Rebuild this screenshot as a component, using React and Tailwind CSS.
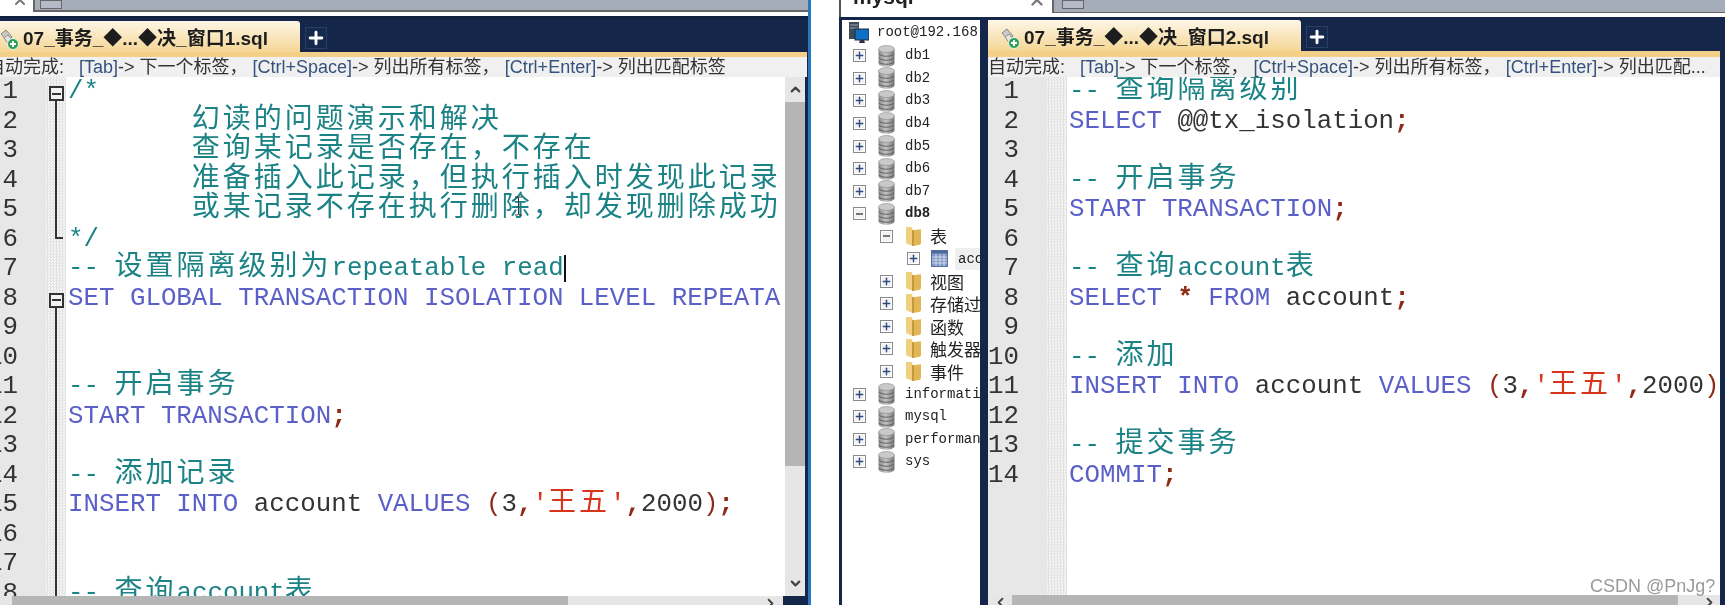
import { ChevronUp, ChevronDown, ChevronLeft, ChevronRight, Plus, X } from "lucide-react"

const tokenColors = {
  c: "text-[#1b8285]",
  k: "text-[#5b5fc8]",
  i: "text-[#333333]",
  s: "text-[#d8341c]",
  p: "text-[#8f2a16]",
  b: "text-[#8f2a16] font-bold",
}

const cjkSplit = /([\u3000-\u9fff\uff00-\uffef]+)/

const insertLine = [["k", "INSERT INTO "], ["i", "account "], ["k", "VALUES "], ["p", "("], ["i", "3"], ["b", ","], ["s", "'王五'"], ["b", ","], ["i", "2000"], ["p", ")"], ["b", ";"]]

const leftLines = [
  [["c", "/*"]],
  [["c", "        幻读的问题演示和解决"]],
  [["c", "        查询某记录是否存在，不存在"]],
  [["c", "        准备插入此记录，但执行插入时发现此记录"]],
  [["c", "        或某记录不存在执行删除，却发现删除成功"]],
  [["c", "*/"]],
  [["c", "-- 设置隔离级别为repeatable read"]],
  [["k", "SET GLOBAL TRANSACTION ISOLATION LEVEL REPEATABLE READ"], ["b", ";"]],
  [],
  [],
  [["c", "-- 开启事务"]],
  [["k", "START TRANSACTION"], ["b", ";"]],
  [],
  [["c", "-- 添加记录"]],
  insertLine,
  [],
  [],
  [["c", "-- 查询account表"]],
]

const rightLines = [
  [["c", "-- 查询隔离级别"]],
  [["k", "SELECT "], ["i", "@@tx_isolation"], ["b", ";"]],
  [],
  [["c", "-- 开启事务"]],
  [["k", "START TRANSACTION"], ["b", ";"]],
  [],
  [["c", "-- 查询account表"]],
  [["k", "SELECT "], ["b", "* "], ["k", "FROM "], ["i", "account"], ["b", ";"]],
  [],
  [["c", "-- 添加"]],
  insertLine,
  [],
  [["c", "-- 提交事务"]],
  [["k", "COMMIT"], ["b", ";"]],
]

const leftFolds = ["start", "mid", "mid", "mid", "mid", "end", "", "start", "mid", "mid", "mid", "mid", "mid", "mid", "mid", "mid", "mid", "mid"]

const topDbs = ["db1", "db2", "db3", "db4", "db5", "db6", "db7"]
const folders = ["视图", "存储过", "函数", "触发器", "事件"]
const otherDbs = ["informati", "mysql", "performan", "sys"]

function Token({ kind, text }) {
  return text.split(cjkSplit).map((part, i) =>
    i % 2 === 1 ? (
      <span key={i} className={`${tokenColors[kind]} text-[28px] tracking-[3px] font-normal leading-[0] font-['Noto_Sans_CJK_SC',sans-serif]`}>{part}</span>
    ) : (
      <span key={i} className={tokenColors[kind]}>{part}</span>
    )
  )
}

function FoldCell({ type }) {
  if (type === "start") {
    return (
      <div className="flex h-[29.5px] flex-col items-center">
        <div className="h-[9px]" />
        <div className="flex h-[15px] w-[15px] shrink-0 items-center justify-center border-2 border-[#333] bg-[#f2f2f2]">
          <div className="h-[2px] w-[9px] bg-[#333]" />
        </div>
        <div className="w-[2px] flex-1 bg-[#333]" />
      </div>
    )
  }
  if (type === "mid") {
    return (
      <div className="flex h-[29.5px] justify-center">
        <div className="w-[2px] bg-[#333]" />
      </div>
    )
  }
  if (type === "end") {
    return (
      <div className="flex h-[29.5px] justify-center">
        <div className="ml-[6px] h-[14px] w-[8px] border-b-2 border-l-2 border-[#333]" />
      </div>
    )
  }
  return <div className="h-[29.5px]" />
}

function TabIcon() {
  return (
    <svg width="20" height="22" viewBox="0 0 20 22" className="shrink-0">
      <path d="M2 6 L7 2 L13 9 L9 14 Z" fill="#c9cbc6" stroke="#85887f" />
      <path d="M5 10 L9 7 L14 13 L10 17 Z" fill="#e4e5e0" stroke="#8d9088" />
      <circle cx="14" cy="16" r="5.5" fill="#2f9e58" stroke="#e8f5ea" />
      <path d="M11 16 H17 M14 13 V19" stroke="#fff" strokeWidth="2" />
    </svg>
  )
}

function StatusBar({ end }) {
  const bracket = "text-[#35527c]"
  return (
    <div className="flex h-full items-center overflow-hidden whitespace-pre bg-[#f0f0f0] text-[18px] text-[#333] font-['Liberation_Sans','Noto_Sans_CJK_SC',sans-serif]">
      <span>自动完成:   </span>
      <span className={bracket}>[Tab]</span>
      <span>-&gt; 下一个标签， </span>
      <span className={bracket}>[Ctrl+Space]</span>
      <span>-&gt; 列出所有标签， </span>
      <span className={bracket}>[Ctrl+Enter]</span>
      <span>-&gt; {end}</span>
    </div>
  )
}

function Editor({ name, lines, folds, end, wide, children, hscroll }) {
  return (
    <div className={wide ? "flex h-full w-[820px] shrink-0 flex-col -ml-[13px]" : "flex h-full min-w-0 flex-1 flex-col"}>
      <div className="flex h-[34px] shrink-0 items-end bg-[#14264a]">
        <div className="flex h-[31px] w-[313px] shrink-0 items-start gap-[4px] rounded-tr-[3px] bg-gradient-to-b from-[#fdf6e6] to-[#f5d694] pl-[12px] pt-[7px] text-[19px] font-bold leading-[22px] text-[#1d1d1d] font-['Liberation_Sans','Noto_Sans_CJK_SC',sans-serif] whitespace-pre">
          <TabIcon />
          <span>{name}</span>
        </div>
        <div className="mb-[3px] ml-[5px] flex h-[22px] w-[22px] items-center justify-center border border-[#2b3f63] bg-[#15284d]">
          <Plus size={20} strokeWidth={3.5} className="text-white" />
        </div>
      </div>
      <div className={wide ? "h-[5px] shrink-0 bg-[#f3cf87]" : "h-[6px] shrink-0 bg-[#f3cf87]"} />
      <div className="h-[20px] shrink-0"><StatusBar end={end} /></div>
      <div className="flex min-h-0 flex-1 overflow-hidden bg-white">
        <div className="flex w-[59px] shrink-0 flex-col items-end bg-[#e7e7e7] pr-[28px] text-[25.8px] leading-[29.5px] text-[#333] font-['Liberation_Mono',monospace]">
          {lines.map((_, i) => <div key={i} className="h-[29.5px] shrink-0">{i + 1}</div>)}
        </div>
        <div className="w-[20px] shrink-0 bg-[repeating-conic-gradient(#e2e2e2_0_25%,#f6f6f6_0_50%)] bg-[length:3px_3px]">
          {folds && folds.map((f, i) => <FoldCell key={i} type={f} />)}
        </div>
        <div className="min-w-0 flex-1 overflow-hidden pl-[2px] text-[25.8px] leading-[29.5px] font-['Liberation_Mono',monospace]">
          {lines.map((tokens, i) => (
            <div key={i} className="h-[29.5px] whitespace-pre">
              {tokens.map(([kind, text], j) => <Token key={j} kind={kind} text={text} />)}
              {wide && i === 6 && <span className="inline-block h-[27px] w-[2px] bg-[#111] align-middle" />}
            </div>
          ))}
        </div>
        {children}
      </div>
      {hscroll}
    </div>
  )
}

function BoxToggle({ open }) {
  return (
    <div className="flex h-[13px] w-[13px] shrink-0 items-center justify-center border border-[#8a8a8a] bg-[#f2f2f4] shadow-[inset_0_0_0_1px_#ffffff]">
      {open
        ? <div className="h-[2px] w-[7px] bg-[#777]" />
        : <Plus size={11} strokeWidth={3} className="text-[#2d4a80]" />}
    </div>
  )
}

function DbIcon() {
  return (
    <svg width="17" height="22" viewBox="0 0 17 22" className="shrink-0">
      <defs>
        <linearGradient id="dbg" x1="0" x2="1" y1="0" y2="0">
          <stop offset="0" stopColor="#8a8a8a" />
          <stop offset="0.45" stopColor="#c4c4c4" />
          <stop offset="1" stopColor="#777" />
        </linearGradient>
      </defs>
      <path d="M0.5 4 V18 C0.5 23 16.5 23 16.5 18 V4 Z" fill="url(#dbg)" />
      <ellipse cx="8.5" cy="4" rx="8" ry="3.5" fill="#c9c9c9" stroke="#8c8c8c" strokeWidth="0.6" />
      <path d="M1 9 C4 12 13 12 16 9 M1 13 C4 16 13 16 16 13 M1 17 C4 20 13 20 16 17" fill="none" stroke="#5f5f5f" strokeWidth="1" />
    </svg>
  )
}

function FolderIcon() {
  return (
    <svg width="15" height="19" viewBox="1 1 13 17" preserveAspectRatio="none" className="shrink-0">
      <path d="M1 1 L6 1 L7 4 L7 18 L2 16 Q1 16 1 14 Z" fill="#f0d07f" />
      <path d="M14 3 L14 15 Q14 17 12 17 L7 18 L7 4 Z" fill="#e2b654" />
      <path d="M6.5 4 L7.5 4 L7.5 18 L6.5 18 Z" fill="#a97a22" />
    </svg>
  )
}

function TableIcon() {
  return (
    <svg width="17" height="17" viewBox="0 0 17 17" className="shrink-0">
      <rect x="0.5" y="0.5" width="16" height="16" fill="#7f97c4" stroke="#54709f" />
      <rect x="0.5" y="0.5" width="16" height="3" fill="#4f6a9c" />
      <path d="M1 7 H16 M1 10 H16 M1 13 H16 M5 4 V16 M9 4 V16 M13 4 V16" stroke="#dfe6f2" strokeWidth="0.8" />
    </svg>
  )
}

function ServerIcon() {
  return (
    <svg width="20" height="22" viewBox="0 0 20 22" className="shrink-0">
      <rect x="0" y="0" width="10" height="17" fill="#3d4a57" />
      <path d="M1 3 H9 M1 6 H9" stroke="#98a5b2" />
      <rect x="6" y="7" width="14" height="11" fill="#0e6fc4" stroke="#1f2a36" />
      <path d="M11 18 H15 L16 21 H10 Z" fill="#2a3440" />
    </svg>
  )
}

function Tree() {
  const row = "flex h-[22.55px] shrink-0 items-center"
  const mono = "whitespace-pre text-[14px] text-[#222] font-['Liberation_Mono',monospace]"
  const cjk = "whitespace-pre text-[17px] text-[#222] font-['Noto_Sans_CJK_SC',sans-serif]"
  return (
    <div className="flex w-[138px] shrink-0 flex-col overflow-hidden bg-white pt-[2px]">
      <div className={`${row} pl-[7px]`}>
        <ServerIcon />
        <span className={`${mono} ml-[8px] -mt-[2px]`}>root@192.168</span>
      </div>
      {topDbs.map((db) => (
        <div key={db} className={`${row} pl-[11px]`}>
          <BoxToggle />
          <div className="ml-[12px]"><DbIcon /></div>
          <span className={`${mono} ml-[10px]`}>{db}</span>
        </div>
      ))}
      <div className={`${row} pl-[11px]`}>
        <BoxToggle open />
        <div className="ml-[12px]"><DbIcon /></div>
        <span className={`${mono} ml-[10px] font-bold`}>db8</span>
      </div>
      <div className={`${row} pl-[38px]`}>
        <BoxToggle open />
        <div className="ml-[13px]"><FolderIcon /></div>
        <span className={`${cjk} ml-[9px]`}>表</span>
      </div>
      <div className={`${row} pl-[65px]`}>
        <BoxToggle />
        <div className="ml-[11px]"><TableIcon /></div>
        <span className={`${mono} ml-[7px] rounded-l-[2px] bg-[#efefef] pl-[3px] pr-[8px] leading-[22px]`}>acc</span>
      </div>
      {folders.map((f) => (
        <div key={f} className={`${row} pl-[38px]`}>
          <BoxToggle />
          <div className="ml-[13px]"><FolderIcon /></div>
          <span className={`${cjk} ml-[9px]`}>{f}</span>
        </div>
      ))}
      {otherDbs.map((db) => (
        <div key={db} className={`${row} pl-[11px]`}>
          <BoxToggle />
          <div className="ml-[12px]"><DbIcon /></div>
          <span className={`${mono} ml-[10px]`}>{db}</span>
        </div>
      ))}
    </div>
  )
}

function VScroll() {
  return (
    <div className="flex w-[20px] shrink-0 flex-col bg-[#e6e6e6]">
      <div className="flex h-[25px] items-center justify-center"><ChevronUp size={15} strokeWidth={3.5} className="text-[#444]" /></div>
      <div className="h-[364px] bg-[#b5b5b5]" />
      <div className="flex-1" />
      <div className="flex h-[25px] items-center justify-center"><ChevronDown size={15} strokeWidth={3.5} className="text-[#444]" /></div>
    </div>
  )
}

export default function App() {
  return (
    <div className="relative flex h-[605px] w-[1727px] overflow-hidden bg-white blur-[0.4px]">
      <div className="flex h-full w-[811px] shrink-0 flex-col overflow-hidden border-r-[3px] border-[#2a78c0]">
        <div className="h-[16px] shrink-0 bg-white">
          <div className="flex h-[12px]">
            <div className="flex w-[33px] shrink-0 justify-end overflow-hidden bg-white pr-[5px]"><X size={16} strokeWidth={3} className="-mt-[8px] text-[#777]" /></div>
            <div className="flex min-w-0 flex-1 border-b-2 border-l-2 border-[#666] bg-[#a5adbb] pl-[5px]">
              <div className="h-[9px] w-[22px] border border-[#666] bg-[#b5bbc6]" />
            </div>
          </div>
        </div>
        <div className="flex min-h-0 flex-1 flex-col overflow-hidden border-t-2 border-[#10203f]">
          <div className="min-h-0 flex-1 overflow-hidden bg-[#14264a]">
            <Editor
              wide
              name="07_事务_◆...◆决_窗口1.sql"
              lines={leftLines}
              folds={leftFolds}
              end="列出匹配标签"
              hscroll={
                <div className="flex h-[9px] shrink-0 overflow-hidden bg-[#e6e6e6]">
                  <div className="w-[25px] shrink-0" />
                  <div className="w-[556px] shrink-0 bg-[#b5b5b5]" />
                  <div className="flex flex-1 justify-end pr-[5px]"><ChevronRight size={15} strokeWidth={3} className="text-[#444]" /></div>
                  <div className="w-[24px] shrink-0 bg-[#14264a]" />
                </div>
              }
            >
              <div className="w-[3px] shrink-0 bg-white" />
              <VScroll />
              <div className="w-[2px] shrink-0 bg-[#14264a]" />
            </Editor>
          </div>
        </div>
      </div>

      <div className="w-[28px] shrink-0 bg-white" />

      <div className="flex h-full w-[886px] shrink-0 flex-col">
        <div className="flex h-[17px] shrink-0 border-l-2 border-[#555]">
          <div className="flex w-[211px] shrink-0 items-start justify-between overflow-hidden bg-white pl-[12px] pr-[6px]">
            <span className="-mt-[19px] text-[21px] font-bold text-[#222] font-['Liberation_Sans',sans-serif]">mysql</span>
            <X size={18} strokeWidth={3} className="-mt-[9px] text-[#777]" />
          </div>
          <div className="flex h-[13px] min-w-0 flex-1 border-b border-l-2 border-[#666] bg-[#a5adbb] pl-[8px]">
            <div className="h-[9px] w-[22px] border border-[#666] bg-[#b5bbc6]" />
          </div>
        </div>
        <div className="flex min-h-0 flex-1 border-l-[3px] border-r-[5px] border-t-[3px] border-[#14264a]">
          <Tree />
          <div className="w-[8px] shrink-0 bg-[#14264a]" />
          <div className="-mt-[3px] flex min-w-0 flex-1 flex-col">
            <Editor
              name="07_事务_◆...◆决_窗口2.sql"
              lines={rightLines}
              end="列出匹配..."
              hscroll={
                <div className="flex h-[10px] shrink-0 overflow-hidden bg-[#e6e6e6]">
                  <div className="flex w-[24px] shrink-0 justify-center"><ChevronLeft size={15} strokeWidth={3} className="text-[#444]" /></div>
                  <div className="w-[666px] shrink-0 bg-[#b5b5b5]" />
                  <div className="flex flex-1 justify-end pr-[3px]"><ChevronRight size={15} strokeWidth={3} className="text-[#444]" /></div>
                </div>
              }
            />
          </div>
        </div>
      </div>

      <svg width="9" height="20" viewBox="0 0 9 20" className="absolute left-[514px] top-[196px]">
        <path d="M1 1 H3.5 L4.5 2 L5.5 1 H8 M4.5 2 V18 M1 19 H3.5 L4.5 18 L5.5 19 H8" fill="none" stroke="#333" strokeWidth="1" />
      </svg>
      <span className="absolute left-[1590px] top-[573px] whitespace-nowrap text-[18px] text-[#9a9a9a] font-['Liberation_Sans',sans-serif]">CSDN @PnJg?</span>
    </div>
  )
}
